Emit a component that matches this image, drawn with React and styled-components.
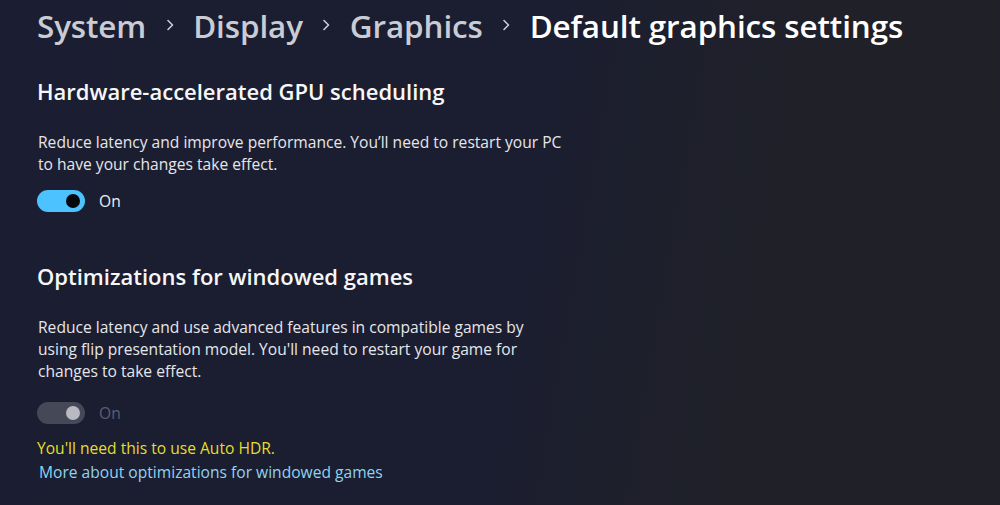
import React from "react";
import styled, { createGlobalStyle } from "styled-components";

const Global = createGlobalStyle`
  html, body { margin: 0; padding: 0; }
  body {
    width: 1000px; height: 505px; overflow: hidden;
    background: #1c1f30;
    font-family: "Open Sans", "Noto Sans", sans-serif;
  }
`;

const Page = styled.div`
  width: 1000px;
  height: 505px;
  box-sizing: border-box;
  padding: 3px 0 0 37px;
  background: linear-gradient(100deg, #1b1e32 0%, #1b1e31 50%, #1f2029 72%, #1f2028 100%);
  display: flex;
  flex-direction: column;
`;

const Breadcrumb = styled.nav`
  display: flex;
  align-items: center;
  height: 44px;
`;

const Crumb = styled.span`
  font-size: 31.4px;
  font-weight: 600;
  color: ${(p) => (p.$current ? "#ffffff" : "#c9ccd5")};
  letter-spacing: -0.1px;
`;

const Chevron = styled.span`
  display: inline-flex;
  width: 47px;
  justify-content: center;
  color: #c9ccd5;
`;

const Section = styled.section`
  display: flex;
  flex-direction: column;
  margin-top: ${(p) => p.$top}px;
`;

const Heading = styled.h2`
  margin: 0;
  font-size: 22px;
  font-weight: 600;
  color: #f7f7f7;
  line-height: 28px;
`;

const Desc = styled.p`
  margin: ${(p) => p.$gap}px 0 0 1px;
  font-size: 15.6px;
  line-height: 22px;
  color: #e6e6ea;
  width: 527px;
`;

const ToggleRow = styled.div`
  display: flex;
  align-items: center;
  gap: 14px;
  margin-top: ${(p) => p.$top}px;
`;

const Track = styled.div`
  width: 48px;
  height: 22px;
  border-radius: 11px;
  background: ${(p) => (p.$disabled ? "#454857" : "#4cc2ff")};
  display: flex;
  align-items: center;
  justify-content: flex-end;
  padding-right: 5px;
  box-sizing: border-box;
`;

const Knob = styled.div`
  width: 14px;
  height: 14px;
  border-radius: 50%;
  background: ${(p) => (p.$disabled ? "#b9b9c1" : "#05070c")};
`;

const ToggleLabel = styled.span`
  font-size: 15.6px;
  color: ${(p) => (p.$disabled ? "#5b5e71" : "#eeeeee")};
`;

const Note = styled.div`
  margin-top: 12px;
  font-size: 15.6px;
  line-height: 24px;
  color: #e6dd2b;
`;

const Link = styled.a`
  margin-left: 2px;
  font-size: 15.6px;
  line-height: 24px;
  color: #8fd3f0;
  text-decoration: none;
`;

const ChevronIcon = () => (
  <svg width="10" height="14" viewBox="0 0 10 14" fill="none">
    <path d="M3 2.5 L7.5 7 L3 11.5" stroke="#c9ccd5" strokeWidth="1.6" strokeLinecap="round" strokeLinejoin="round" />
  </svg>
);

function Toggle({ disabled, top }) {
  return (
    <ToggleRow $top={top}>
      <Track $disabled={disabled}>
        <Knob $disabled={disabled} />
      </Track>
      <ToggleLabel $disabled={disabled}>On</ToggleLabel>
    </ToggleRow>
  );
}

export default function App() {
  const crumbs = ["System", "Display", "Graphics"];
  return (
    <>
      <Global />
      <Page>
        <Breadcrumb>
          {crumbs.map((c) => (
            <React.Fragment key={c}>
              <Crumb>{c}</Crumb>
              <Chevron>
                <ChevronIcon />
              </Chevron>
            </React.Fragment>
          ))}
          <Crumb $current>Default graphics settings</Crumb>
        </Breadcrumb>
        <Section $top={30}>
          <Heading>Hardware-accelerated GPU scheduling</Heading>
          <Desc $gap={26}>
            Reduce latency and improve performance. You’ll need to restart your PC to have your changes take effect.
          </Desc>
          <Toggle top={15} />
        </Section>
        <Section $top={50}>
          <Heading>Optimizations for windowed games</Heading>
          <Desc $gap={26}>
            Reduce latency and use advanced features in compatible games by using flip presentation model. You'll need to restart your game for changes to take effect.
          </Desc>
          <Toggle disabled top={20} />
          <Note>You'll need this to use Auto HDR.</Note>
          <Link href="#">More about optimizations for windowed games</Link>
        </Section>
      </Page>
    </>
  );
}
